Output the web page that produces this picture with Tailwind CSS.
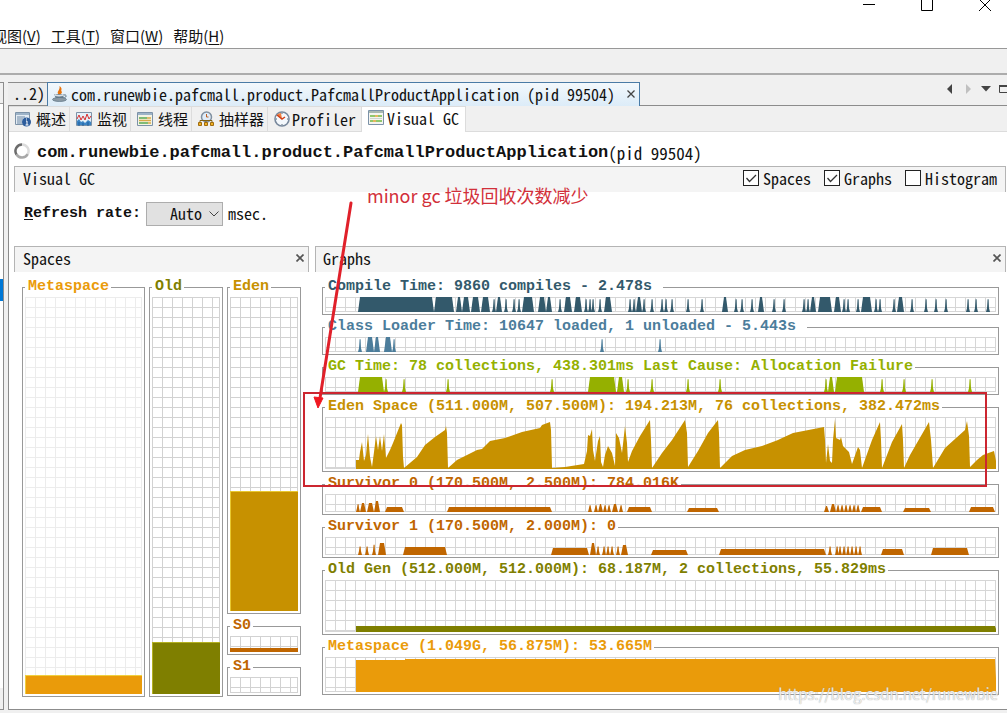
<!DOCTYPE html>
<html lang="zh-CN">
<head>
  <meta charset="UTF-8" />
  <meta name="viewport" content="width=device-width, initial-scale=1.0" />
  <title>Visual GC</title>
  <script src="https://cdn.jsdelivr.net/npm/@tailwindcss/browser@4"></script>
</head>
<body class="relative min-h-screen overflow-hidden bg-[#f0f0f0] flex flex-col text-[#111] text-[16px] leading-5 font-['Noto_Sans_Mono_CJK_SC','Liberation_Mono','Noto_Sans_CJK_SC',monospace]">
  <!-- Title bar + menu -->
  <header class="bg-white h-12 shrink-0">
    <div class="flex justify-end gap-[46px] pr-4 h-6">
      <button aria-label="最小化" class="w-3 h-3"><svg class="block w-3 h-3" viewBox="0 0 12 12"><path d="M0 4.5H12" stroke="#000" /></svg></button>
      <button aria-label="最大化" class="w-3 h-3"><svg class="block w-3 h-3" viewBox="0 0 12 12"><path d="M.5 0V10.500H11.500V0" fill="none" stroke="#000" /></svg></button>
      <button aria-label="关闭" class="w-3 h-3"><svg class="block w-3 h-3" viewBox="0 0 12 12"><path d="M0-1L12 11M12-1L0 11" stroke="#000" /></svg></button>
    </div>
    <nav class="flex gap-[10px] -ml-2 text-[15px] leading-6 font-['Noto_Sans_CJK_SC',sans-serif] whitespace-nowrap">
      <button>视图(<u class="underline-offset-2">V</u>)</button>
      <button>工具(<u class="underline-offset-2">T</u>)</button>
      <button>窗口(<u class="underline-offset-2">W</u>)</button>
      <button>帮助(<u class="underline-offset-2">H</u>)</button>
    </nav>
  </header>
  <div class="h-[27px] shrink-0 border-t border-b-2 border-t-[#989898] border-b-[#acacac]"></div>

  <div class="flex-1 flex gap-1 pt-[7px] pb-[3px]">
    <!-- Applications tree, scrolled out of view -->
    <aside class="w-1 shrink-0 overflow-hidden border-t border-r border-b border-[#8c8c8c] pt-5">
      <div class="h-[176px] border-t border-[#a0a0a0] bg-white"></div>
      <div class="h-[22px] bg-[#0078d7]"></div>
      <div class="h-[387px] bg-white"></div>
    </aside>

    <div class="flex-1 min-w-0 flex flex-col">
      <!-- Document tabs -->
      <div class="flex h-6 whitespace-nowrap">
        <button class="w-[39px] text-right pr-[2px] pb-[2px] border-t border-b border-[#8c8c8c] bg-[#ececec]">..2)</button>
        <div class="flex items-center w-[593px] pb-[2px] border-t border-x border-[#4a7ba6] bg-linear-to-b from-[#f3f8fc] to-[#dcecf8]">
          <svg class="w-4 h-4 ml-1 mr-[3px] shrink-0" viewBox="0 0 16 16">
            <path d="M7.500 9C3 6 8.500 5 7.500 0c4 3 .5 4 2.500 6-.5 1.500-1 2-2.500 3z" fill="#e8730c" />
            <path d="M2 8h10l-1 5H4z" fill="#6f8494" />
            <path d="M12 9c3-1 3 3-1 3" fill="none" stroke="#5d7485" />
            <ellipse cx="7.500" cy="13.500" rx="7" ry="2" fill="#8c9ba6" stroke="#52697b" stroke-width=".6" />
            <path d="M2.500 8.500c1 1.500 8 1.500 9 0" fill="none" stroke="#d7e0e7" stroke-width="1.500" />
          </svg>
          <span>com.runewbie.pafcmall.product.PafcmallProductApplication (pid 99504)</span>
          <button aria-label="关闭" class="ml-auto mr-1"><svg class="block w-2 h-2" viewBox="0 0 8 8"><path d="M.5.5l7 7M7.500.5l-7 7" stroke="#444" stroke-width="1.300" /></svg></button>
        </div>
        <div class="flex-1 flex items-start justify-end border-b border-[#8c8c8c] pt-[2px]">
          <svg class="block w-[62px] h-[10px]" viewBox="0 0 62 10">
            <path d="M7 0v10L2 5z" fill="#444" /><path d="M21 0v10l5-5z" fill="#c0c0c0" />
            <path d="M36 2h10l-5 5.500z" fill="#444" /><path d="M54.500 1.500h12v7h-12z" fill="none" stroke="#444" /><path d="M54 2h10" stroke="#444" stroke-width="2" />
          </svg>
        </div>
      </div>

      <div class="flex-1 flex flex-col bg-white border-l border-b border-[#8c8c8c]">
        <!-- View tabs -->
        <div class="flex h-[26px] bg-[#f0f0f0] border-b border-[#dcdcdc] whitespace-nowrap text-[15px]">
          <button class="flex items-center gap-[5px] w-[61px] pl-[6px] border-t border-r border-[#dcdcdc]">
            <svg class="w-4 h-4 shrink-0" viewBox="0 0 16 16"><path d="M.5 1.500h14v12H.5z" fill="#e4ecf4" stroke="#7c92a8" /><path d="M1 2h13v2H1z" fill="#9db3c8" /><path d="M2 6h8M2 8h6M2 10h5M2 12h5" stroke="#6c88a4" /><circle cx="11.500" cy="11" r="4.500" fill="#2c5c9c" /><path d="M11 10h1v4M10.500 14h3M11 8h1" stroke="#fff" fill="none" /></svg>概述</button>
          <button class="flex items-center gap-[5px] w-[61px] pl-[6px] border-t border-r border-[#dcdcdc]">
            <svg class="w-4 h-4 shrink-0" viewBox="0 0 16 16"><path d="M.5 1.500h15v13H.5z" fill="#e4f0f8" stroke="#7c92a8" /><path d="M1 14V10l2-2 2 3 2-1 2 2 3-3 3 2v3z" fill="#3c84c4" /><path d="M3 15v-4M7 15v-3M12 15v-4" stroke="#1c5c9c" /><path d="M1 8l2-4 2 5 2-4 2 4 2-6 2 5 2-3" fill="none" stroke="#d83030" /></svg>监视</button>
          <button class="flex items-center gap-[5px] w-[61px] pl-[6px] border-t border-r border-[#dcdcdc]">
            <svg class="w-4 h-4 shrink-0" viewBox="0 0 16 16"><path d="M.5 1.500h15v13H.5z" fill="#f4f4e4" stroke="#7c92a8" /><path d="M1 2h14v2H1z" fill="#9db3c8" /><path d="M2 7h8M2 12h9" stroke="#58a850" stroke-width="1.500" /><path d="M10 7h4M2 9.500h12M11 12h3" stroke="#d8a848" stroke-width="1.500" /></svg>线程</button>
          <button class="flex items-center gap-[5px] w-[76px] pl-[6px] border-t border-r border-[#dcdcdc]">
            <svg class="w-4 h-4 shrink-0" viewBox="0 0 16 16"><circle cx="8.500" cy="6" r="5" fill="#e0ecf8" stroke="#8090a0" stroke-width="1.500" /><path d="M8.500 6V3M8.500 6h2" stroke="#c06020" /><path d="M2 12V9.500h12V12M8 9.500V12" fill="none" stroke="#806010" /><path d="M.5 11.500h3v3h-3zM6.500 11.500h3v3h-3zM12.500 11.500h3v3h-3z" fill="#f0b020" stroke="#a06c10" /></svg>抽样器</button>
          <button class="flex items-center gap-[2px] w-[94px] pl-[6px] border-t border-r border-[#dcdcdc] text-[16px]">
            <svg class="w-4 h-4 shrink-0" viewBox="0 0 16 16"><circle cx="8" cy="8" r="7" fill="#f4f8fc" stroke="#78889c" stroke-width="1.600" /><path d="M8 8L3 4a6 6 0 0 1 4-2z" fill="#f08040" /><path d="M3 4l5 4 3-2" fill="none" stroke="#d04018" stroke-width="1.500" /><path d="M8 2v1M8 13v1M2 8h1M13 8h1" stroke="#567" /></svg>Profiler</button>
          <button class="flex items-center gap-[3px] w-[104px] h-[26px] pl-[6px] pb-1 border-t border-r border-[#dcdcdc] bg-white text-[16px]">
            <svg class="w-4 h-4 shrink-0" viewBox="0 0 16 16"><path d="M.5.5h15v14H.5z" fill="#f4f4f0" stroke="#7c92a8" /><path d="M1 1h14v2H1z" fill="#a8b8b0" /><path d="M2 6h5M10 6h4M2 11h3M8 11h6" stroke="#70b840" stroke-width="1.500" /><path d="M7 6h3M5 11h3" stroke="#e0a030" stroke-width="1.500" /><path d="M2 8.500h12" stroke="#ccd4cc" /></svg>Visual GC</button>
        </div>

        <!-- Application title -->
        <div class="flex h-[34px] pl-[5px] pt-[11px] whitespace-nowrap">
          <svg class="w-4 h-4 mr-[7px] shrink-0" viewBox="0 0 16 16"><g fill="none" stroke-width="2.500"><path d="M8 1.500a6.500 6.500 0 0 1 5.700 9.700" stroke="#dcdcdc" /><path d="M13.700 11.200A6.500 6.500 0 0 1 2.500 11.500" stroke="#a8a8a8" /><path d="M2.500 11.500A6.500 6.500 0 0 1 8 1.500" stroke="#6c6c6c" /></g></svg>
          <h1 class="text-[17px] font-bold font-['Liberation_Mono',monospace]">com.runewbie.pafcmall.product.PafcmallProductApplication</h1>
          <span class="text-[17px]">(pid 99504)</span>
        </div>

        <div class="flex items-center h-[26px] ml-[5px] mr-px pb-[3px] pl-2 pr-2 border-t border-x border-[#b4b4b4] bg-[#f4f4f4]">
          <h2>Visual GC</h2>
          <div class="ml-auto flex gap-[13px]">
            <label class="relative flex items-center gap-1"><input type="checkbox" checked class="peer appearance-none w-4 h-4 border border-[#222] bg-white" /><svg class="absolute left-0 w-4 h-4 pointer-events-none hidden peer-checked:block" viewBox="0 0 16 16"><path d="M3.500 8l3 3.500L13 5" fill="none" stroke="#333" stroke-width="1.300" /></svg>Spaces</label>
            <label class="relative flex items-center gap-1"><input type="checkbox" checked class="peer appearance-none w-4 h-4 border border-[#222] bg-white" /><svg class="absolute left-0 w-4 h-4 pointer-events-none hidden peer-checked:block" viewBox="0 0 16 16"><path d="M3.500 8l3 3.500L13 5" fill="none" stroke="#333" stroke-width="1.300" /></svg>Graphs</label>
            <label class="relative flex items-center gap-1"><input type="checkbox" class="peer appearance-none w-4 h-4 border border-[#222] bg-white" /><svg class="absolute left-0 w-4 h-4 pointer-events-none hidden peer-checked:block" viewBox="0 0 16 16"><path d="M3.500 8l3 3.500L13 5" fill="none" stroke="#333" stroke-width="1.300" /></svg>Histogram</label>
          </div>
        </div>

        <div class="flex items-center h-[54px] pl-[15px] pb-[10px]">
          <label for="rate" class="font-['Liberation_Mono',monospace] font-bold text-[15px]"><u class="underline-offset-2">R</u>efresh rate:</label>
          <div class="relative ml-[5px] mr-[5px]">
            <select id="rate" class="block appearance-none w-[77px] h-6 pl-[23px] pb-[3px] border border-[#adadad] bg-[#e1e1e1]"><option>Auto</option></select>
            <svg class="absolute right-1 top-2 w-[10px] h-2 pointer-events-none" viewBox="0 0 10 8"><path d="M.5 1.500L5 6l4.500-4.500" fill="none" stroke="#444" /></svg>
          </div>
          <span class="pb-[2px]">msec.</span>
        </div>

        <div class="flex-1 flex gap-[6px] pl-[5px] pr-px">
          <!-- Spaces -->
          <section class="w-[295px] shrink-0 flex flex-col">
            <div class="flex items-center justify-between h-[26px] pb-[3px] pl-2 pr-1 border-t border-x border-[#b4b4b4] bg-[#f4f4f4]">
              <h2>Spaces</h2>
              <button aria-label="关闭 Spaces"><svg class="block w-2 h-2" viewBox="0 0 8 8"><path d="M.5.5l7 7M7.500.5l-7 7" stroke="#555" stroke-width="1.700" /></svg></button>
            </div>
            <div class="flex gap-1 h-[425px] pt-[5px] pl-2 font-['Liberation_Mono',monospace] font-bold text-[15px]">
              <fieldset class="w-[123px] border border-[#999] px-[2px] pb-[2px]">
                <legend class="h-5 pl-[3px] pr-[2px] text-[#ea9b0a]">Metaspace</legend>
                <div class="h-[397px] flex items-end bg-[linear-gradient(to_right,#ececec_1px,transparent_1px),linear-gradient(#ececec_1px,transparent_1px)] bg-[size:10px_10px] shadow-[inset_-1px_-1px_#ececec]">
                  <div class="w-full h-[19px] bg-[#ea9b0a] border-t border-l border-[#f0d040]"></div>
                </div>
              </fieldset>
              <fieldset class="w-[74px] border border-[#999] px-[2px] pb-[2px]">
                <legend class="h-5 pl-[3px] pr-[2px] text-[#7f7f00]">Old</legend>
                <div class="h-[397px] flex items-end bg-[linear-gradient(to_right,#d2d2d2_1px,transparent_1px),linear-gradient(#d2d2d2_1px,transparent_1px)] bg-[size:10px_10px] shadow-[inset_-1px_-1px_#d2d2d2]">
                  <div class="w-full h-[52px] bg-[#7f7f00] border-t border-l border-[#b4b020]"></div>
                </div>
              </fieldset>
              <div class="w-[74px] flex flex-col gap-[2px]">
                <fieldset class="border border-[#999] px-[2px] pb-[2px]">
                  <legend class="h-5 pl-[3px] pr-[2px] text-[#c79100]">Eden</legend>
                  <div class="h-[314px] flex items-end bg-[linear-gradient(to_right,#d2d2d2_1px,transparent_1px),linear-gradient(#d2d2d2_1px,transparent_1px)] bg-[size:10px_10px] shadow-[inset_-1px_-1px_#d2d2d2]">
                    <div class="w-full h-[120px] bg-[#c79100] border-t border-l border-[#e8c830]"></div>
                  </div>
                </fieldset>
                <fieldset class="border border-[#999] px-[2px] pb-[2px]">
                  <legend class="h-5 pl-[3px] pr-[2px] text-[#c06600]">S0</legend>
                  <div class="h-4 flex items-end bg-[linear-gradient(to_right,#d2d2d2_1px,transparent_1px),linear-gradient(#d2d2d2_1px,transparent_1px)] bg-[size:10px_10px] shadow-[inset_-1px_-1px_#d2d2d2]">
                    <div class="w-full h-1 bg-[#c06600]"></div>
                  </div>
                </fieldset>
                <fieldset class="border border-[#999] px-[2px] pb-[2px]">
                  <legend class="h-5 pl-[3px] pr-[2px] text-[#c06600]">S1</legend>
                  <div class="h-4 bg-[linear-gradient(to_right,#d2d2d2_1px,transparent_1px),linear-gradient(#d2d2d2_1px,transparent_1px)] bg-[size:10px_10px] shadow-[inset_-1px_-1px_#d2d2d2]"></div>
                </fieldset>
              </div>
            </div>
          </section>

          <!-- Graphs -->
          <section class="flex-1 min-w-0 flex flex-col">
            <div class="flex items-center justify-between h-[26px] pb-[3px] pl-[7px] pr-1 border-t border-x border-[#b4b4b4] bg-[#f4f4f4]">
              <h2>Graphs</h2>
              <button aria-label="关闭 Graphs"><svg class="block w-2 h-2" viewBox="0 0 8 8"><path d="M.5.5l7 7M7.500.5l-7 7" stroke="#555" stroke-width="1.700" /></svg></button>
            </div>
            <div id="graphs" class="flex flex-col gap-[2px] pt-[5px] pl-[7px] pr-[7px] font-['Liberation_Mono',monospace] font-bold text-[15px] whitespace-pre"></div>
          </section>
        </div>
      </div>
    </div>
  </div>

  <!-- Annotation -->
  <svg class="absolute left-0 top-0 w-[1007px] h-[713px] pointer-events-none" viewBox="0 0 1007 713">
    <rect x="304" y="393" width="682" height="93" fill="none" stroke="#cc2630" stroke-width="2" />
    <path d="M351 203L320 398" stroke="#e0202a" stroke-width="3" stroke-linecap="round" />
    <path d="M318 408l-4-11 9 1z" fill="#f01820" stroke="#f01820" />
  </svg>
  <p class="absolute left-[367px] top-[183px] text-[18px] leading-6 text-[#d2303a] whitespace-nowrap font-['Noto_Sans_CJK_SC',sans-serif]">minor gc 垃圾回收次数减少</p>
  <p class="absolute right-[9px] top-[684px] text-[15px] leading-5 text-white/80 whitespace-nowrap font-['Noto_Sans_CJK_SC',sans-serif] [text-shadow:0_0_1px_#888]">https://blog.csdn.net/runewbie</p>

  <script>
    // bars: [start, end, height]
    const b = (h, s) => s.split(' ').map(p => [...p.split('-').map(Number), h]);

    const graphs = [
      {
        title: 'Compile Time: 9860 compiles - 2.478s ', color: '#33596b', h: 15,
        bars: b(15, '33-109 109-129 131-137 137-145 146-155 156-165 167-171 171-177 179-183 187-191 192-196 197-209 213-221 221-227 233-237 239-247 249-257 259-263 263-267 266-270 273-277 279-287 303-307 307-311 311-317 317-321 325-329 335-339 339-343 345-349 361-365 375-379 397-403 409-413 415-419 425-429 433-439 447-451 457-461 477-481 481-485 485-491 493-507 509-516 517-521 521-525 531-535 536-547 549-553 553-557 567-571 572-579 585-589 599-603 609-613 619-623 641-645 649-653 661-665')
      },
      {
        title: 'Class Loader Time: 10647 loaded, 1 unloaded - 5.443s ', color: '#4c7d9b', h: 15,
        bars: b(15, '33-37 41-49 49-55 59-67 67-71 275-279 333-337')
      },
      {
        title: 'GC Time: 78 collections, 438.301ms Last Cause: Allocation Failure', color: '#95b000', h: 15,
        bars: b(15, '33-59 59-63 77-81 121-125 225-229 263-291 292-299 301-305 325-329 361-365 393-397 499-503 503-509 510-539 555-559 577-581 605-609 643-647')
      },
      {
        title: 'Eden Space (511.000M, 507.500M): 194.213M, 76 collections, 382.472ms', color: '#c79100', h: 52,
        line: '31,52 31,43 34,43 35,35 37,25 39,44 41,38 43,17 45,40 47,50 49,35 51,19 53,33 55,19 57,34 59,17 61,41 65,33 68,26 72,16 76,6 77,8 78,40 79,51 92,40 100,28 110,20 120,13 121,9 122,16 123,51 132,43 152,33 157,32 165,24 180,21 197,15 215,11 217,8 225,5 226,13 227,51 240,50 259,47 262,34 263,18 265,19 267,12 268,33 270,44 273,24 275,19 276,45 278,50 280,38 283,29 287,36 290,49 291,16 294,21 297,36 300,9 302,26 303,45 307,34 315,19 325,3 326,23 327,51 337,36 347,23 360,3 362,16 363,50 373,34 383,16 393,3 394,16 395,51 407,39 420,33 437,29 453,23 455,22 468,16 499,10 500,23 501,46 503,27 505,44 507,46 508,23 510,2 511,21 515,23 516,20 518,29 524,35 527,47 533,30 535,33 537,51 547,23 555,5 556,23 557,51 567,25 577,7 578,23 579,51 585,38 604,5 606,23 608,51 620,31 640,13 642,4 644,19 645,50 652,43 658,38 669,34 671,44 671,52'
      },
      {
        title: 'Survivor 0 (170.500M, 2.500M): 784.016K', color: '#c06600', h: 18,
        bars: [...b(9, '31-35 35-41 42-49'), ...b(11, '49-55'), ...b(5, '60-79 122-227 302-327 536-557 644-670'), ...b(4, '362-394 578-606'), ...b(8, '263-267 269-273 273-278 278-282 282-286 287-293 294-298 505-511 511-515 515-519 519-523 523-527 527-531 531-535'), ...b(6, '499-504')]
      },
      {
        title: 'Survivor 1 (170.500M, 2.000M): 0', color: '#c06600', h: 18,
        bars: [...b(10, '33-37 40-44 271-275 277-281 281-285 285-289 291-295 296-303 503-507 510-514 513-517 517-521 521-525 525-529 529-533 533-537'), ...b(12, '47-51 53-61 265-271'), ...b(8, '78-122'), ...b(7, '226-264 606-644'), ...b(5, '326-363'), ...b(6, '394-501 556-579')]
      },
      { title: 'Old Gen (512.000M, 512.000M): 68.187M, 2 collections, 55.829ms', color: '#7f7f00', h: 52, line: '31,52 31,46 670,46 671,49 671,52' },
      { title: 'Metaspace (1.049G, 56.875M): 53.665M', color: '#ea9b0a', h: 35, line: '31,35 31,3 80,3 80,2 670,2 671,22 671,35' }
    ];

    function barPoints([x0, x1, top], h) {
      if (x1 - x0 < 5) {
        const y = h - top * 0.85;
        return `${x0},${h} ${x0 + 1},${h - 4} ${x0 + 1.6},${y} ${x0 + 2.6},${y} ${x0 + 3},${h - 4} ${x1},${h}`;
      }
      return `${x0},${h} ${x0 + 2},${h - top} ${x1 - 2},${h - top} ${x1},${h}`;
    }

    document.getElementById('graphs').innerHTML = graphs.map(g => {
      const shapes = g.line ? [g.line] : g.bars.map(bar => barPoints(bar, g.h));
      return `<fieldset class="min-w-0 border border-[#999] px-[2px] pb-[2px]"><legend class="h-5 pl-[3px] pr-[2px]" style="color:${g.color}">${g.title}</legend><div class="bg-[linear-gradient(to_right,#d6d6d6_1px,transparent_1px),linear-gradient(#d6d6d6_1px,transparent_1px)] bg-[size:10px_10px] shadow-[inset_-1px_-1px_#d6d6d6]" style="height:${g.h}px"><svg class="block w-full h-full" viewBox="0 0 671 ${g.h}" preserveAspectRatio="none" fill="${g.color}">${shapes.map(p => `<polygon points="${p}"/>`).join('')}</svg></div></fieldset>`;
    }).join('');
  </script>
</body>
</html>
